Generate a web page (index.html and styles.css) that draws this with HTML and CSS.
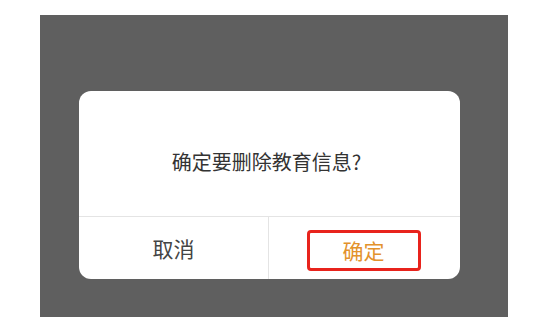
FILE: index.html
```html
<!DOCTYPE html>
<html lang="zh-CN">
<head>
<meta charset="utf-8">
<link rel="stylesheet" href="styles.css">
</head>
<body>
<div class="overlay">
  <div class="dialog">
    <div class="dialog-body">
      <p class="dialog-title">确定要删除教育信息?</p>
    </div>
    <div class="dialog-actions">
      <div class="action action-cancel">取消</div>
      <div class="action action-confirm">
        <span class="confirm-box">确定</span>
      </div>
    </div>
  </div>
</div>
</body>
</html>
```

FILE: styles.css
```css
html, body {
  margin: 0;
  padding: 0;
  background: #ffffff;
  font-family: "Noto Sans CJK SC", "Noto Sans", sans-serif;
}

.overlay {
  box-sizing: border-box;
  margin: 15px 0 0 40px;
  width: 468px;
  height: 302px;
  padding: 76px 0 0 39px;
  background: #5f5f5f;
}

.dialog {
  width: 381px;
  height: 188px;
  background: #ffffff;
  border-radius: 12px;
  overflow: hidden;
  display: flex;
  flex-direction: column;
}

.dialog-body {
  box-sizing: border-box;
  height: 126px;
  border-bottom: 1px solid #e4e4e4;
  padding-top: 61px;
}

.dialog-title {
  margin: 0;
  text-align: center;
  font-size: 20px;
  line-height: 20px;
  color: #333333;
  padding-right: 6px;
}

.dialog-actions {
  flex: 1;
  display: flex;
}

.action {
  flex: 1;
  display: flex;
  align-items: center;
  justify-content: center;
  font-size: 21px;
}

.action-cancel {
  color: #444444;
  border-right: 1px solid #e4e4e4;
}

.action-confirm {
  padding-top: 4px;
  padding-right: 2px;
}

.confirm-box {
  box-sizing: border-box;
  width: 114px;
  height: 41px;
  border: 3px solid #e8231c;
  border-radius: 4px;
  display: flex;
  align-items: center;
  justify-content: center;
  color: #e3922c;
}
```
